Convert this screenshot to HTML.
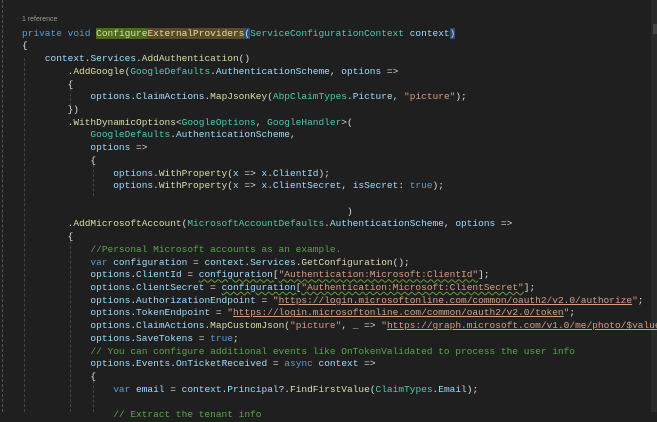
<!DOCTYPE html>
<html><head><meta charset="utf-8"><style>
html,body{margin:0;padding:0;background:#1f1f1f;width:657px;height:412px;overflow:hidden}
.c{position:absolute;left:22px;top:0;font-family:"Liberation Mono",monospace;font-size:9.5px;color:#dcdcdc;white-space:pre}
.l{position:absolute;left:0;height:12.72px;line-height:12.72px}
.k{color:#569cd6}.v{color:#9cdcfe}.m{color:#dcdcaa}.t{color:#4ec9b0}.s{color:#d69d85}.g{color:#57a64a}.u{text-decoration:underline}
.sq{text-decoration:underline wavy #6a9a3a;text-decoration-thickness:1px}
.ref{position:absolute;left:22px;top:16px;font-family:"Liberation Sans",sans-serif;font-size:7px;color:#999}
.gd{position:absolute;border-left:1px dashed #444;width:0}
</style></head><body>
<div class="gd" style="left:2px;top:0;height:412px;border-color:#555"></div>
<div class="gd" style="left:24px;top:58px;height:354px"></div>
<div class="gd" style="left:70px;top:84px;height:22px"></div>
<div class="gd" style="left:70px;top:236px;height:176px"></div>
<div class="gd" style="left:93px;top:160px;height:36px"></div>
<div class="gd" style="left:93px;top:376px;height:36px"></div>
<div style="position:absolute;left:651px;top:0;width:6px;height:412px;background:#2a2a2a"></div>
<div style="position:absolute;left:653px;top:24px;width:4px;height:10px;background:#444"></div>
<div class="ref">1 reference</div>
<div class="c">
<div class="l" style="top:27.6px"><span class="k">private</span> <span class="k">void</span> <span class="m" style="background:#4b6b1e">Configure</span><span class="m" style="background:#5a4a26">ExternalProviders</span><span style="background:#264f78">(</span><span class="t">ServiceConfigurationContext</span> <span class="v">context</span><span style="background:#264f78">)</span></div>
<div class="l" style="top:40.3px">{</div>
<div class="l" style="top:53.0px">    <span class="v">context</span>.<span class="v">Services</span>.<span class="m">AddAuthentication</span>()</div>
<div class="l" style="top:65.8px">        .<span class="m">AddGoogle</span>(<span class="t">GoogleDefaults</span>.<span class="v">AuthenticationScheme</span>, <span class="v">options</span> =&gt;</div>
<div class="l" style="top:78.5px">        {</div>
<div class="l" style="top:91.2px">            <span class="v">options</span>.<span class="v">ClaimActions</span>.<span class="m">MapJsonKey</span>(<span class="t">AbpClaimTypes</span>.<span class="v">Picture</span>, <span class="s">"picture"</span>);</div>
<div class="l" style="top:103.9px">        })</div>
<div class="l" style="top:116.6px">        .<span class="m">WithDynamicOptions</span>&lt;<span class="t">GoogleOptions</span>, <span class="t">GoogleHandler</span>&gt;(</div>
<div class="l" style="top:129.4px">            <span class="t">GoogleDefaults</span>.<span class="v">AuthenticationScheme</span>,</div>
<div class="l" style="top:142.1px">            <span class="v">options</span> =&gt;</div>
<div class="l" style="top:154.8px">            {</div>
<div class="l" style="top:167.5px">                <span class="v">options</span>.<span class="m">WithProperty</span>(<span class="v">x</span> =&gt; <span class="v">x</span>.<span class="v">ClientId</span>);</div>
<div class="l" style="top:180.2px">                <span class="v">options</span>.<span class="m">WithProperty</span>(<span class="v">x</span> =&gt; <span class="v">x</span>.<span class="v">ClientSecret</span>, <span class="v">isSecret</span>: <span class="k">true</span>);</div>
<div class="l" style="top:205.7px">                                                         )</div>
<div class="l" style="top:218.4px">        .<span class="m">AddMicrosoftAccount</span>(<span class="t">MicrosoftAccountDefaults</span>.<span class="v">AuthenticationScheme</span>, <span class="v">options</span> =&gt;</div>
<div class="l" style="top:231.1px">        {</div>
<div class="l" style="top:243.8px">            <span class="g">//Personal Microsoft accounts as an example.</span></div>
<div class="l" style="top:256.6px">            <span class="k">var</span> <span class="v">configuration</span> = <span class="v">context</span>.<span class="v">Services</span>.<span class="m">GetConfiguration</span>();</div>
<div class="l" style="top:269.3px">            <span class="v">options</span>.<span class="v">ClientId</span> = <span class="sq"><span class="v">configuration</span>[<span class="s">"Authentication:Microsoft:ClientId"</span></span>];</div>
<div class="l" style="top:282.0px">            <span class="v">options</span>.<span class="v">ClientSecret</span> = <span class="sq"><span class="v">configuration</span>[<span class="s">"Authentication:Microsoft:ClientSecret"</span></span>];</div>
<div class="l" style="top:294.7px">            <span class="v">options</span>.<span class="v">AuthorizationEndpoint</span> = <span class="s">"<span class="u">https://login.microsoftonline.com/common/oauth2/v2.0/authorize</span>"</span>;</div>
<div class="l" style="top:307.4px">            <span class="v">options</span>.<span class="v">TokenEndpoint</span> = <span class="s">"<span class="u">https://login.microsoftonline.com/common/oauth2/v2.0/token</span>"</span>;</div>
<div class="l" style="top:320.2px">            <span class="v">options</span>.<span class="v">ClaimActions</span>.<span class="m">MapCustomJson</span>(<span class="s">"picture"</span>, <span class="v">_</span> =&gt; <span class="s">"<span class="u">https://graph.microsoft.com/v1.0/me/photo/$value</span>"</span>);</div>
<div class="l" style="top:332.9px">            <span class="v">options</span>.<span class="v">SaveTokens</span> = <span class="k">true</span>;</div>
<div class="l" style="top:345.6px">            <span class="g">// You can configure additional events like OnTokenValidated to process the user info</span></div>
<div class="l" style="top:358.3px">            <span class="v">options</span>.<span class="v">Events</span>.<span class="v">OnTicketReceived</span> = <span class="k">async</span> <span class="v">context</span> =&gt;</div>
<div class="l" style="top:371.0px">            {</div>
<div class="l" style="top:383.8px">                <span class="k">var</span> <span class="v">email</span> = <span class="v">context</span>.<span class="v">Principal</span>?.<span class="m">FindFirstValue</span>(<span class="t">ClaimTypes</span>.<span class="v">Email</span>);</div>
<div class="l" style="top:409.2px">                <span class="g">// Extract the tenant info</span></div>
</div>
</body></html>
